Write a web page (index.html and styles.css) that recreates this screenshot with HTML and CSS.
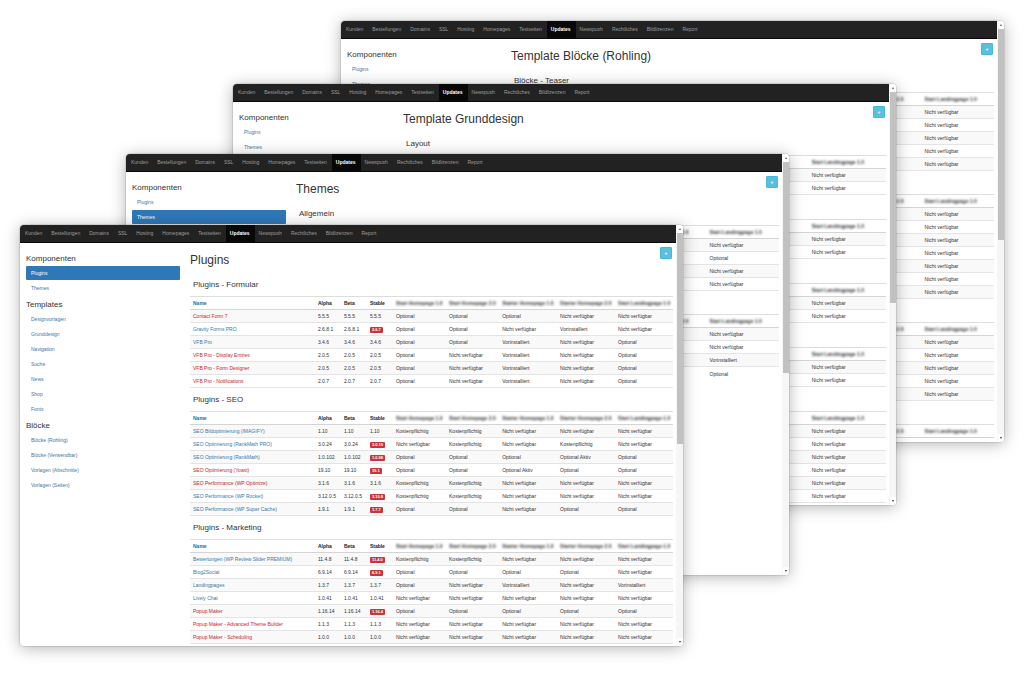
FILE: index.html
```html
<!DOCTYPE html>
<html lang="de">
<head>
<meta charset="utf-8">
<title>Updates</title>
<link rel="stylesheet" href="styles.css">
</head>
<body>
<main class="stage">

<section class="window window-blocks">
  <div class="page">
    <nav class="topnav">
      <a href="#">Kunden</a><a href="#">Bestellungen</a><a href="#">Domains</a><a href="#">SSL</a><a href="#">Hosting</a><a href="#">Homepages</a><a href="#">Testseiten</a><a href="#" class="active">Updates</a><a href="#">Newspush</a><a href="#">Rechtliches</a><a href="#">Bildlizenzen</a><a href="#">Report</a>
    </nav>
    <div class="columns">
      <aside class="sidebar">
        <h2>Komponenten</h2>
        <ul><li><a href="#">Plugins</a></li><li><a href="#">Themes</a></li></ul>
      </aside>
      <div class="content">
        <header class="content-head"><h1>Template Blöcke (Rohling)</h1><button class="add" type="button">+</button></header>
        <section class="group">
          <h2>Blöcke - Teaser</h2>
          <table class="versions partial">
            <colgroup><col><col class="c-last"><col class="c-last"></colgroup>
            <thead><tr><th></th><th><span class="masked">Starter Homepage 2.0</span></th><th><span class="masked">Start Landingpage 1.0</span></th></tr></thead>
            <tbody>
              <tr><td colspan="2"></td><td>Nicht verfügbar</td></tr>
              <tr><td colspan="2"></td><td>Nicht verfügbar</td></tr>
              <tr><td colspan="2"></td><td>Nicht verfügbar</td></tr>
              <tr><td colspan="2"></td><td>Nicht verfügbar</td></tr>
              <tr><td colspan="2"></td><td>Nicht verfügbar</td></tr>
            </tbody>
          </table>
        </section>
        <section class="group untitled">
          <table class="versions partial">
            <colgroup><col><col class="c-last"><col class="c-last"></colgroup>
            <thead><tr><th></th><th><span class="masked">Starter Homepage 2.0</span></th><th><span class="masked">Start Landingpage 1.0</span></th></tr></thead>
            <tbody>
              <tr><td colspan="2"></td><td>Nicht verfügbar</td></tr>
              <tr><td colspan="2"></td><td>Nicht verfügbar</td></tr>
              <tr><td colspan="2"></td><td>Nicht verfügbar</td></tr>
              <tr><td colspan="2"></td><td>Nicht verfügbar</td></tr>
              <tr><td colspan="2"></td><td>Nicht verfügbar</td></tr>
              <tr><td colspan="2"></td><td>Nicht verfügbar</td></tr>
              <tr><td colspan="2"></td><td>Nicht verfügbar</td></tr>
            </tbody>
          </table>
        </section>
        <section class="group untitled">
          <table class="versions partial">
            <colgroup><col><col class="c-last"><col class="c-last"></colgroup>
            <thead><tr><th></th><th><span class="masked">Starter Homepage 2.0</span></th><th><span class="masked">Start Landingpage 1.0</span></th></tr></thead>
            <tbody>
              <tr><td colspan="2"></td><td>Nicht verfügbar</td></tr>
              <tr><td colspan="2"></td><td>Nicht verfügbar</td></tr>
              <tr><td colspan="2"></td><td>Nicht verfügbar</td></tr>
              <tr><td colspan="2"></td><td>Nicht verfügbar</td></tr>
              <tr><td colspan="2"></td><td>Nicht verfügbar</td></tr>
            </tbody>
          </table>
        </section>
        <section class="group untitled">
          <table class="versions partial">
            <colgroup><col><col class="c-last"><col class="c-last"></colgroup>
            <thead><tr><th></th><th><span class="masked">Starter Homepage 2.0</span></th><th><span class="masked">Start Landingpage 1.0</span></th></tr></thead>
          </table>
        </section>
      </div>
    </div>
  </div>
  <div class="scrollbar"><i class="arrow up"></i><i class="thumb"></i><i class="arrow down"></i></div>
</section>

<section class="window window-base">
  <div class="page">
    <nav class="topnav">
      <a href="#">Kunden</a><a href="#">Bestellungen</a><a href="#">Domains</a><a href="#">SSL</a><a href="#">Hosting</a><a href="#">Homepages</a><a href="#">Testseiten</a><a href="#" class="active">Updates</a><a href="#">Newspush</a><a href="#">Rechtliches</a><a href="#">Bildlizenzen</a><a href="#">Report</a>
    </nav>
    <div class="columns">
      <aside class="sidebar">
        <h2>Komponenten</h2>
        <ul><li><a href="#">Plugins</a></li><li><a href="#">Themes</a></li></ul>
      </aside>
      <div class="content">
        <header class="content-head"><h1>Template Grunddesign</h1><button class="add" type="button">+</button></header>
        <section class="group">
          <h2>Layout</h2>
          <table class="versions partial">
            <colgroup><col><col class="c-wide"><col class="c-wide"></colgroup>
            <thead><tr><th></th><th><span class="masked">Starter Homepage 2.0</span></th><th><span class="masked">Start Landingpage 1.0</span></th></tr></thead>
            <tbody>
              <tr><td colspan="2"></td><td>Nicht verfügbar</td></tr>
              <tr><td colspan="2"></td><td>Nicht verfügbar</td></tr>
            </tbody>
          </table>
        </section>
        <section class="group untitled">
          <table class="versions partial">
            <colgroup><col><col class="c-wide"><col class="c-wide"></colgroup>
            <thead><tr><th></th><th><span class="masked">Starter Homepage 2.0</span></th><th><span class="masked">Start Landingpage 1.0</span></th></tr></thead>
            <tbody>
              <tr><td colspan="2"></td><td>Nicht verfügbar</td></tr>
              <tr><td colspan="2"></td><td>Nicht verfügbar</td></tr>
            </tbody>
          </table>
        </section>
        <section class="group untitled">
          <table class="versions partial">
            <colgroup><col><col class="c-wide"><col class="c-wide"></colgroup>
            <thead><tr><th></th><th><span class="masked">Starter Homepage 2.0</span></th><th><span class="masked">Start Landingpage 1.0</span></th></tr></thead>
            <tbody>
              <tr><td colspan="2"></td><td>Nicht verfügbar</td></tr>
              <tr><td colspan="2"></td><td>Nicht verfügbar</td></tr>
            </tbody>
          </table>
        </section>
        <section class="group untitled">
          <table class="versions partial">
            <colgroup><col><col class="c-wide"><col class="c-wide"></colgroup>
            <thead><tr><th></th><th><span class="masked">Starter Homepage 2.0</span></th><th><span class="masked">Start Landingpage 1.0</span></th></tr></thead>
            <tbody>
              <tr><td colspan="2"></td><td>Nicht verfügbar</td></tr>
              <tr><td colspan="2"></td><td>Nicht verfügbar</td></tr>
            </tbody>
          </table>
        </section>
        <section class="group untitled">
          <table class="versions partial">
            <colgroup><col><col class="c-wide"><col class="c-wide"></colgroup>
            <thead><tr><th></th><th><span class="masked">Starter Homepage 2.0</span></th><th><span class="masked">Start Landingpage 1.0</span></th></tr></thead>
            <tbody>
              <tr><td colspan="2"></td><td>Nicht verfügbar</td></tr>
              <tr><td colspan="2"></td><td>Nicht verfügbar</td></tr>
              <tr><td colspan="2"></td><td>Nicht verfügbar</td></tr>
              <tr><td colspan="2"></td><td>Nicht verfügbar</td></tr>
              <tr><td colspan="2"></td><td>Nicht verfügbar</td></tr>
              <tr><td colspan="2"></td><td>Nicht verfügbar</td></tr>
            </tbody>
          </table>
        </section>
      </div>
    </div>
  </div>
  <div class="scrollbar"><i class="arrow up"></i><i class="thumb"></i><i class="arrow down"></i></div>
</section>

<section class="window window-themes">
  <div class="page">
    <nav class="topnav">
      <a href="#">Kunden</a><a href="#">Bestellungen</a><a href="#">Domains</a><a href="#">SSL</a><a href="#">Hosting</a><a href="#">Homepages</a><a href="#">Testseiten</a><a href="#" class="active">Updates</a><a href="#">Newspush</a><a href="#">Rechtliches</a><a href="#">Bildlizenzen</a><a href="#">Report</a>
    </nav>
    <div class="columns">
      <aside class="sidebar">
        <h2>Komponenten</h2>
        <ul><li><a href="#">Plugins</a></li><li><a href="#" class="active">Themes</a></li></ul>
      </aside>
      <div class="content">
        <header class="content-head"><h1>Themes</h1><button class="add" type="button">+</button></header>
        <section class="group">
          <h2>Allgemein</h2>
          <table class="versions partial">
            <colgroup><col><col class="c-last"><col class="c-last"></colgroup>
            <thead><tr><th></th><th><span class="masked">Starter Homepage 2.0</span></th><th><span class="masked">Start Landingpage 1.0</span></th></tr></thead>
            <tbody>
              <tr><td colspan="2"></td><td>Nicht verfügbar</td></tr>
              <tr><td colspan="2"></td><td>Optional</td></tr>
              <tr><td colspan="2"></td><td>Nicht verfügbar</td></tr>
              <tr><td colspan="2"></td><td>Nicht verfügbar</td></tr>
            </tbody>
          </table>
        </section>
        <section class="group untitled">
          <table class="versions partial">
            <colgroup><col><col class="c-last"><col class="c-last"></colgroup>
            <thead><tr><th></th><th><span class="masked">Starter Homepage 2.0</span></th><th><span class="masked">Start Landingpage 1.0</span></th></tr></thead>
            <tbody>
              <tr><td colspan="2"></td><td>Nicht verfügbar</td></tr>
              <tr><td colspan="2"></td><td>Nicht verfügbar</td></tr>
              <tr><td colspan="2"></td><td>Vorinstalliert</td></tr>
              <tr class="open"><td colspan="2"></td><td>Optional</td></tr>
            </tbody>
          </table>
        </section>
      </div>
    </div>
  </div>
  <div class="scrollbar"><i class="arrow up"></i><i class="thumb"></i><i class="arrow down"></i></div>
</section>

<section class="window window-plugins">
  <div class="page">
    <nav class="topnav">
      <a href="#">Kunden</a><a href="#">Bestellungen</a><a href="#">Domains</a><a href="#">SSL</a><a href="#">Hosting</a><a href="#">Homepages</a><a href="#">Testseiten</a><a href="#" class="active">Updates</a><a href="#">Newspush</a><a href="#">Rechtliches</a><a href="#">Bildlizenzen</a><a href="#">Report</a>
    </nav>
    <div class="columns">
      <aside class="sidebar">
        <h2>Komponenten</h2>
        <ul><li><a href="#" class="active">Plugins</a></li><li><a href="#">Themes</a></li></ul>
        <h2>Templates</h2>
        <ul><li><a href="#">Designvorlagen</a></li><li><a href="#">Grunddesign</a></li><li><a href="#">Navigation</a></li><li><a href="#">Suche</a></li><li><a href="#">News</a></li><li><a href="#">Shop</a></li><li><a href="#">Fonts</a></li></ul>
        <h2>Blöcke</h2>
        <ul><li><a href="#">Blöcke (Rohling)</a></li><li><a href="#">Blöcke (Verwendbar)</a></li><li><a href="#">Vorlagen (Abschnitte)</a></li><li><a href="#">Vorlagen (Seiten)</a></li></ul>
      </aside>
      <div class="content">
        <header class="content-head"><h1>Plugins</h1><button class="add" type="button">+</button></header>
        <section class="group">
          <h2>Plugins - Formular</h2>
          <table class="versions">
            <colgroup><col><col class="c-ver"><col class="c-ver"><col class="c-ver"><col class="c-start"><col class="c-start"><col class="c-plan"><col class="c-plan"><col class="c-plan"></colgroup>
            <thead><tr><th class="name">Name</th><th>Alpha</th><th>Beta</th><th>Stable</th><th><span class="masked">Start Homepage 1.0</span></th><th><span class="masked">Start Homepage 2.0</span></th><th><span class="masked">Starter Homepage 1.0</span></th><th><span class="masked">Starter Homepage 2.0</span></th><th><span class="masked">Start Landingpage 1.0</span></th></tr></thead>
            <tbody>
              <tr><td><a href="#" class="alert">Contact Form 7</a></td><td>5.5.5</td><td>5.5.5</td><td>5.5.5</td><td>Optional</td><td>Optional</td><td>Optional</td><td>Nicht verfügbar</td><td>Nicht verfügbar</td></tr>
              <tr><td><a href="#">Gravity Forms PRO</a></td><td>2.6.8.1</td><td>2.6.8.1</td><td><span class="badge">2.6.7</span></td><td>Optional</td><td>Optional</td><td>Nicht verfügbar</td><td>Vorinstalliert</td><td>Nicht verfügbar</td></tr>
              <tr><td><a href="#">VFB Pro</a></td><td>3.4.6</td><td>3.4.6</td><td>3.4.6</td><td>Optional</td><td>Optional</td><td>Vorinstalliert</td><td>Nicht verfügbar</td><td>Optional</td></tr>
              <tr><td><a href="#" class="alert">VFB Pro - Display Entries</a></td><td>2.0.5</td><td>2.0.5</td><td>2.0.5</td><td>Optional</td><td>Nicht verfügbar</td><td>Vorinstalliert</td><td>Nicht verfügbar</td><td>Optional</td></tr>
              <tr><td><a href="#" class="alert">VFB Pro - Form Designer</a></td><td>2.0.5</td><td>2.0.5</td><td>2.0.5</td><td>Optional</td><td>Nicht verfügbar</td><td>Vorinstalliert</td><td>Nicht verfügbar</td><td>Optional</td></tr>
              <tr><td><a href="#" class="alert">VFB Pro - Notifications</a></td><td>2.0.7</td><td>2.0.7</td><td>2.0.7</td><td>Optional</td><td>Nicht verfügbar</td><td>Vorinstalliert</td><td>Nicht verfügbar</td><td>Optional</td></tr>
            </tbody>
          </table>
        </section>
        <section class="group">
          <h2>Plugins - SEO</h2>
          <table class="versions">
            <colgroup><col><col class="c-ver"><col class="c-ver"><col class="c-ver"><col class="c-start"><col class="c-start"><col class="c-plan"><col class="c-plan"><col class="c-plan"></colgroup>
            <thead><tr><th class="name">Name</th><th>Alpha</th><th>Beta</th><th>Stable</th><th><span class="masked">Start Homepage 1.0</span></th><th><span class="masked">Start Homepage 2.0</span></th><th><span class="masked">Starter Homepage 1.0</span></th><th><span class="masked">Starter Homepage 2.0</span></th><th><span class="masked">Start Landingpage 1.0</span></th></tr></thead>
            <tbody>
              <tr><td><a href="#">SEO Bildoptimierung (IMAGIFY)</a></td><td>1.10</td><td>1.10</td><td>1.10</td><td>Kostenpflichtig</td><td>Kostenpflichtig</td><td>Nicht verfügbar</td><td>Nicht verfügbar</td><td>Nicht verfügbar</td></tr>
              <tr><td><a href="#">SEO Optimierung (RankMath PRO)</a></td><td>3.0.24</td><td>3.0.24</td><td><span class="badge">3.0.19</span></td><td>Nicht verfügbar</td><td>Kostenpflichtig</td><td>Nicht verfügbar</td><td>Kostenpflichtig</td><td>Nicht verfügbar</td></tr>
              <tr><td><a href="#">SEO Optimierung (RankMath)</a></td><td>1.0.102</td><td>1.0.102</td><td><span class="badge">1.0.98</span></td><td>Optional</td><td>Optional</td><td>Optional</td><td>Optional Aktiv</td><td>Optional</td></tr>
              <tr><td><a href="#" class="alert">SEO Optimierung (Yoast)</a></td><td>19.10</td><td>19.10</td><td><span class="badge">19.1</span></td><td>Optional</td><td>Optional</td><td>Optional Aktiv</td><td>Optional</td><td>Optional</td></tr>
              <tr><td><a href="#" class="alert">SEO Performance (WP Optimize)</a></td><td>3.1.6</td><td>3.1.6</td><td>3.1.6</td><td>Kostenpflichtig</td><td>Kostenpflichtig</td><td>Nicht verfügbar</td><td>Nicht verfügbar</td><td>Nicht verfügbar</td></tr>
              <tr><td><a href="#">SEO Performance (WP Rocket)</a></td><td>3.12.0.5</td><td>3.12.0.5</td><td><span class="badge">3.10.8</span></td><td>Kostenpflichtig</td><td>Kostenpflichtig</td><td>Nicht verfügbar</td><td>Nicht verfügbar</td><td>Nicht verfügbar</td></tr>
              <tr><td><a href="#">SEO Performance (WP Super Cache)</a></td><td>1.9.1</td><td>1.9.1</td><td><span class="badge">1.7.7</span></td><td>Optional</td><td>Optional</td><td>Nicht verfügbar</td><td>Optional</td><td>Optional</td></tr>
            </tbody>
          </table>
        </section>
        <section class="group">
          <h2>Plugins - Marketing</h2>
          <table class="versions">
            <colgroup><col><col class="c-ver"><col class="c-ver"><col class="c-ver"><col class="c-start"><col class="c-start"><col class="c-plan"><col class="c-plan"><col class="c-plan"></colgroup>
            <thead><tr><th class="name">Name</th><th>Alpha</th><th>Beta</th><th>Stable</th><th><span class="masked">Start Homepage 1.0</span></th><th><span class="masked">Start Homepage 2.0</span></th><th><span class="masked">Starter Homepage 1.0</span></th><th><span class="masked">Starter Homepage 2.0</span></th><th><span class="masked">Start Landingpage 1.0</span></th></tr></thead>
            <tbody>
              <tr><td><a href="#">Bewertungen (WP Review Slider PREMIUM)</a></td><td>11.4.8</td><td>11.4.8</td><td><span class="badge">11.4.0</span></td><td>Kostenpflichtig</td><td>Kostenpflichtig</td><td>Nicht verfügbar</td><td>Nicht verfügbar</td><td>Nicht verfügbar</td></tr>
              <tr><td><a href="#">Blog2Social</a></td><td>6.9.14</td><td>6.9.14</td><td><span class="badge">6.9.1</span></td><td>Optional</td><td>Optional</td><td>Optional</td><td>Optional</td><td>Nicht verfügbar</td></tr>
              <tr><td><a href="#">Landingpages</a></td><td>1.3.7</td><td>1.3.7</td><td>1.3.7</td><td>Optional</td><td>Nicht verfügbar</td><td>Vorinstalliert</td><td>Nicht verfügbar</td><td>Vorinstalliert</td></tr>
              <tr><td><a href="#">Lively Chat</a></td><td>1.0.41</td><td>1.0.41</td><td>1.0.41</td><td>Nicht verfügbar</td><td>Nicht verfügbar</td><td>Nicht verfügbar</td><td>Nicht verfügbar</td><td>Nicht verfügbar</td></tr>
              <tr><td><a href="#" class="alert">Popup Maker</a></td><td>1.16.14</td><td>1.16.14</td><td><span class="badge">1.16.4</span></td><td>Optional</td><td>Optional</td><td>Optional</td><td>Optional</td><td>Optional</td></tr>
              <tr><td><a href="#" class="alert">Popup Maker - Advanced Theme Builder</a></td><td>1.1.3</td><td>1.1.3</td><td>1.1.3</td><td>Nicht verfügbar</td><td>Nicht verfügbar</td><td>Nicht verfügbar</td><td>Nicht verfügbar</td><td>Nicht verfügbar</td></tr>
              <tr><td><a href="#" class="alert">Popup Maker - Scheduling</a></td><td>1.0.0</td><td>1.0.0</td><td>1.0.0</td><td>Nicht verfügbar</td><td>Nicht verfügbar</td><td>Nicht verfügbar</td><td>Nicht verfügbar</td><td>Nicht verfügbar</td></tr>
            </tbody>
          </table>
        </section>
      </div>
    </div>
  </div>
  <div class="scrollbar"><i class="arrow up"></i><i class="thumb"></i><i class="arrow down"></i></div>
</section>

</main>
</body>
</html>
```

FILE: styles.css
```css
* { box-sizing: border-box; }

body {
  margin: 0;
  background: #fff;
  color: #333;
  font-family: "Liberation Sans", Arial, sans-serif;
  font-size: 5px;
  line-height: 12px;
}

a { color: #3d76a8; text-decoration: none; }
ul { list-style: none; margin: 0; padding: 0; }

.stage {
  position: relative;
  min-height: 674px;
}

/* Browser windows stacked on the canvas */
.window {
  position: absolute;
  display: flex;
  width: calc(100% - 361px);
  height: 421px;
  overflow: hidden;
  background: #fff;
  border-radius: 4px;
  box-shadow: 0 0 1px 1px rgba(0, 0, 0, 0.1), 0 2px 16px rgba(0, 0, 0, 0.3);
}
.window-blocks { left: 341px; top: 21px; }
.window-base { left: 233px; top: 84px; }
.window-themes { left: 126px; top: 154px; }
.window-plugins { left: 20px; top: 225px; }

.page { flex: 1; min-width: 0; }

.topnav {
  display: flex;
  height: 18px;
  padding-left: 1px;
  background: #222;
  border-bottom: 1px solid #080808;
}
.topnav a {
  padding: 0 5px 0 4px;
  line-height: 17px;
  color: #9d9d9d;
}
.topnav .active {
  background: #080808;
  color: #fff;
  font-weight: bold;
}

.columns {
  display: grid;
  grid-template-columns: 154fr 483fr;
  gap: 10px;
  padding: 0 3px 0 6px;
}

.sidebar { padding-top: 11px; }
.sidebar h2 {
  margin: 0 0 3px;
  font-size: 8px;
  font-weight: normal;
  line-height: 9px;
}
.sidebar ul { display: grid; gap: 1px; }
.sidebar ul + h2 { margin-top: 5px; }
.sidebar a {
  display: block;
  padding: 0 5px;
  line-height: 14px;
  border-radius: 1px;
}
.sidebar .active { background: #2f78b8; color: #fff; }

.content-head {
  display: flex;
  justify-content: space-between;
  align-items: flex-start;
  padding: 4px 1px 6px 0;
}
.content-head h1 {
  margin: 6px 0 0;
  font-size: 12px;
  font-weight: normal;
  line-height: 14px;
}
.add {
  width: 12px;
  height: 12px;
  padding: 0;
  border: 1px solid #46b8da;
  border-radius: 1px;
  background: #5bc0de;
  color: #fff;
  font: bold 5px/10px "Liberation Sans", Arial, sans-serif;
}

.group h2 {
  margin: 0;
  padding: 7px 3px;
  font-size: 8px;
  font-weight: normal;
  line-height: 9px;
}
.group.untitled { padding-top: 23px; }
.window-base .untitled { padding-top: 24px; }

.versions {
  width: 100%;
  table-layout: fixed;
  border-spacing: 0;
}
.versions th,
.versions td {
  height: 13px;
  padding: 0 0 0 3px;
  border-bottom: 1px solid #e4e4e4;
  text-align: left;
  white-space: nowrap;
}
.versions th {
  border-top: 1px solid #ddd;
  border-bottom-color: #d4d4d4;
  color: #222;
}
.versions .name { color: #2a6da5; }
.versions tbody tr:nth-child(odd) { background: #f9f9f9; }
.versions .open td { border-bottom: 0; }
.versions .alert { color: #c81e28; }

.c-ver { width: 26px; }
.c-start { width: 11%; }
.c-plan { width: 12%; }
.c-last { width: 15%; }
.c-wide { width: 16%; }

.masked {
  display: block;
  color: #333;
  font-weight: bold;
  filter: blur(1px);
}

.badge {
  display: inline-block;
  padding: 0 2px;
  border-radius: 1px;
  background: #c9363a;
  color: #fff;
  font-size: 4px;
  font-weight: bold;
  line-height: 6px;
  vertical-align: middle;
}

.scrollbar {
  display: flex;
  flex-direction: column;
  width: 7px;
  padding-left: 1px;
  background: #f6f6f6;
}
.thumb { height: 50%; background: #c1c1c1; }
.arrow {
  display: grid;
  place-items: center;
  height: 8px;
  background: #fff;
}
.arrow::before {
  content: "";
  border: 1px solid transparent;
}
.up::before { border-bottom: 2px solid #555; border-top: 0; }
.down { margin-top: auto; }
.down::before { border-top: 2px solid #333; border-bottom: 0; }
```
